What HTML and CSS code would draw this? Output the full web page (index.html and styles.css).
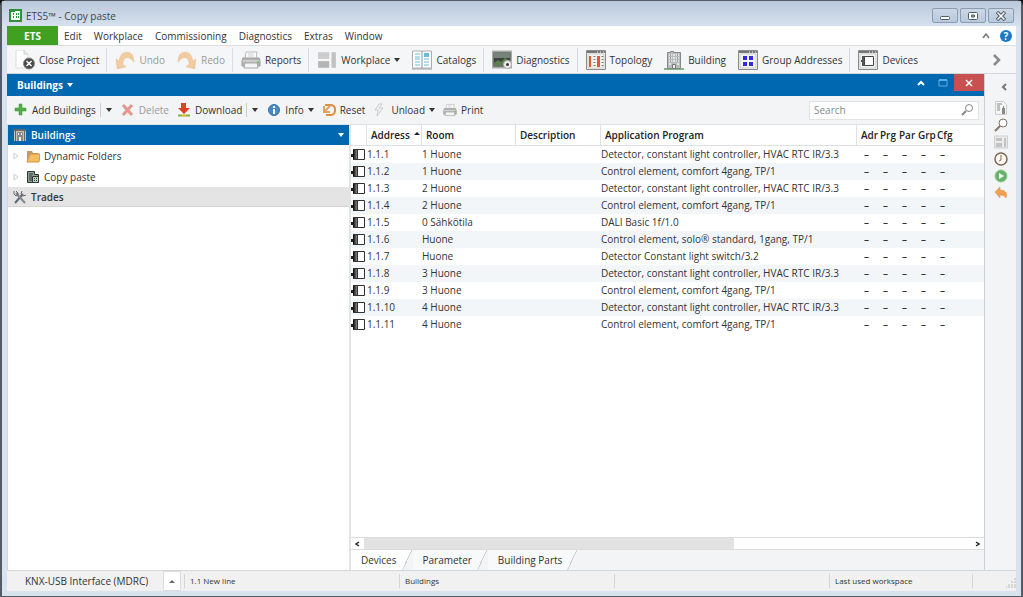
FILE: index.html
```html
<!DOCTYPE html>
<html lang="en">
<head>
    <meta charset="UTF-8">
    <meta name="viewport" content="width=device-width, initial-scale=1.0">
    <title>ETS5™ - Copy paste</title>
    <link rel="stylesheet" href="styles.css">
</head>
<body>
    <!-- shared icons -->
    <svg class="defs" aria-hidden="true">
        <defs>
            <linearGradient id="fade" x1="0" x2="1" y1="0" y2="0">
                <stop offset="0" stop-color="#000"/>
                <stop offset="1" stop-color="#888"/>
            </linearGradient>
        </defs>
        <symbol id="device" viewBox="0 0 15 14">
            <path d="M0 6h2v3H0z" fill="#222"/>
            <path d="M2 1h4v11H2z" fill="url(#fade)"/>
            <path d="M6.500 1.500h7v10h-7z" fill="#fff" stroke="#333"/>
            <path d="M2 1.500h5M2 11.500h5" stroke="#333"/>
        </symbol>
        <symbol id="undo" viewBox="0 0 18 18">
            <path d="M1 8l1 9 8-2-3-2c0-4 2-7 5-6 2 0 3 2 5 4 0-6-2-9-6-9-4 0-7 3-7 8z" fill="#f0a85a" stroke="#dd9545" stroke-width=".5"/>
        </symbol>
        <symbol id="printer" viewBox="0 0 20 18">
            <path d="M5 1h11l-1 7H4z" fill="#fff" stroke="#bbb"/>
            <path d="M2 7h16l1 3v5H1v-5z" fill="#b5b5b5" stroke="#999"/>
            <path d="M1.500 10h17" stroke="#e5e5e5"/>
            <path d="M4 12h12l1 5H3z" fill="#f5f5f5" stroke="#aaa"/>
            <path d="M16 10h2v2h-2z" fill="#7cc07c"/>
            <path d="M7 3h6M7 5h6" stroke="#ccc"/>
        </symbol>
        <symbol id="magnifier" viewBox="0 0 14 14">
            <circle cx="9" cy="5" r="3.500" fill="#fff" stroke="#888"/>
            <path d="M6 8l-4 4" stroke="#888" stroke-width="2"/>
        </symbol>
        <symbol id="layout" viewBox="0 0 18 18">
            <path d="M1 2h10v6H1z" fill="#ccc"/>
            <path d="M1 10h10v6H1z" fill="#b5b5b5"/>
            <path d="M13 2h4v14h-4z" fill="#c2c2c2"/>
        </symbol>
        <symbol id="frame" viewBox="0 0 20 20">
            <path d="M.5 .5h19v19H.5z" fill="#f4f4f2" stroke="#8a8a8a"/>
            <path d="M1 1h18v2H1z" fill="#777"/>
            <path d="M2 4h16v14H2z" fill="none" stroke="#ccc"/>
            <path d="M11 2h1m2 0h1m2 0h1" stroke="#fff"/>
        </symbol>
    </svg>

    <div class="window">
        <header class="titlebar">
            <svg class="app-icon" viewBox="0 0 13 13">
                <path d="M0 0h13v13H0z" fill="#2d9137"/>
                <path d="M2 11V3h4V2h5v9z" fill="#fff"/>
                <path d="M4 4h1v2H4zM4 7h1v2H4zM7 4h1v2H7zM7 7h1v2H7zM9 4h1v2H9zM9 7h1v2H9z" fill="#2d9137"/>
            </svg>
            <h1 class="title">ETS5™ - Copy paste</h1>
            <div class="window-controls">
                <button aria-label="Minimize"><svg viewBox="0 0 12 10"><rect x="1.500" y="5.500" width="9" height="3" rx="1" fill="#fff" stroke="#525c69"/></svg></button>
                <button aria-label="Maximize"><svg viewBox="0 0 12 10"><rect x="1.500" y="1.500" width="9" height="7" rx="1" fill="#fff" stroke="#525c69"/><path d="M4.500 4h3v2h-3z" fill="#aaa" stroke="#525c69"/></svg></button>
                <button aria-label="Close"><svg viewBox="0 0 12 10"><path d="M2 1l8 8M10 1L2 9" stroke="#525c69" stroke-width="3.600"/><path d="M2.500 1.500l7 7M9.500 1.500l-7 7" stroke="#fff" stroke-width="1.500"/></svg></button>
            </div>
        </header>

        <nav class="menubar">
            <button class="ets">ETS</button>
            <button>Edit</button>
            <button>Workplace</button>
            <button>Commissioning</button>
            <button>Diagnostics</button>
            <button>Extras</button>
            <button>Window</button>
            <span class="spacer"></span>
            <button aria-label="Collapse"><svg class="chev" viewBox="0 0 8 8"><path d="M1 6l3-4 3 4" fill="none" stroke="#777" stroke-width="1.500"/></svg></button>
            <button class="help" aria-label="Help">?</button>
        </nav>

        <div class="toolbar">
            <div class="group">
                <button>
                    <svg class="icon" viewBox="0 0 20 20">
                        <path d="M1 0h8l4 4v14H1z" fill="#fff" stroke="#ddd"/>
                        <path d="M9 0v4h4" fill="#eee" stroke="#ccc"/>
                        <circle cx="14" cy="13.500" r="5.500" fill="#4a4a4a" stroke="#888"/>
                        <path d="M11.500 11l5 5M16.500 11l-5 5" stroke="#fff" stroke-width="1.500"/>
                    </svg>
                    Close Project
                </button>
            </div>
            <div class="group">
                <button disabled><svg class="icon"><use href="#undo"/></svg>Undo</button>
                <button disabled><svg class="icon flip"><use href="#undo"/></svg>Redo</button>
            </div>
            <div class="group">
                <button>
                    <svg class="icon"><use href="#printer"/></svg>
                    Reports
                </button>
            </div>
            <div class="group">
                <button><svg class="icon"><use href="#layout"/></svg>Workplace<i class="arrow"></i></button>
                <button>
                    <svg class="icon" viewBox="0 0 20 20">
                        <path d="M.5 1h9l.5 1 .5-1h9v17H.5z" fill="#fff" stroke="#a8b0b5"/>
                        <path d="M10 1v17" stroke="#8a9499"/>
                        <path d="M3 4h5M3 7h5M3 9h5M3 12h5M3 15h5M12 12h5M12 15h5M12 9h5" stroke="#68bbdc"/>
                        <path d="M12 3h5v4h-5z" fill="#68bbdc"/>
                        <path d="M0 19h20" stroke="#999"/>
                    </svg>
                    Catalogs
                </button>
            </div>
            <div class="group">
                <button>
                    <svg class="icon" viewBox="0 0 20 20">
                        <path d="M.5 1.500h19v16H.5z" fill="#3b463b" stroke="#aaa" stroke-width="2"/>
                        <path d="M2 3h16v5H2z" fill="#77827a"/>
                        <path d="M2 13l4-3 3 2 4-4 5 3v5H2z" fill="#5c8050"/>
                        <circle cx="15.500" cy="14.500" r="4" fill="#eee" stroke="#aaa"/>
                        <circle cx="15.500" cy="14.500" r="1.500" fill="#333"/>
                    </svg>
                    Diagnostics
                </button>
            </div>
            <div class="group">
                <button>
                    <svg class="icon" viewBox="0 0 20 20">
                        <use href="#frame"/>
                        <path d="M3 6h2v11H3zM11 6h3v11h-3z" fill="#e4582c"/>
                        <path d="M8.500 6v11M16.500 6v11" stroke="#777" stroke-width="2" stroke-dasharray="1 2"/>
                    </svg>
                    Topology
                </button>
                <button>
                    <svg class="icon" viewBox="0 0 20 20">
                        <path d="M0 18h20v2H0z" fill="#7db87f"/>
                        <path d="M3.500 2.500h3v-1h3v1h7v16h-13z" fill="#b8bcbc" stroke="#858989"/>
                        <path d="M5 4h3v2H5zM9 4h2v2H9zM12 4h3v2h-3zM5 7h3v2H5zM9 7h2v2H9zM12 7h3v2h-3zM5 10h3v2H5zM9 10h2v2H9zM12 10h3v2h-3zM5 13h2v2H5zM13 13h2v2h-2z" fill="#e2e6e6"/>
                        <path d="M6 4h1v2H6zM13 4h1v2h-1zM6 7h1v2H6zM13 7h1v2h-1zM6 10h1v2H6zM13 10h1v2h-1z" fill="#999"/>
                        <path d="M8.500 14.500h3v4h-3z" fill="#eee" stroke="#777"/>
                    </svg>
                    Building
                </button>
                <button>
                    <svg class="icon" viewBox="0 0 20 20">
                        <use href="#frame"/>
                        <path d="M5 6h4v4H5zM11 6h4v4h-4zM5 12h4v4H5zM11 12h4v4h-4z" fill="#3428e8"/>
                    </svg>
                    Group Addresses
                </button>
            </div>
            <div class="group">
                <button>
                    <svg class="icon" viewBox="0 0 20 20">
                        <use href="#frame"/>
                        <path d="M4 6h3v10H4zM3 10h2v2H3z" fill="#555"/>
                        <path d="M6.500 6.500h9v9h-9z" fill="#fff" stroke="#444"/>
                    </svg>
                    Devices
                </button>
            </div>
            <span class="spacer"></span>
            <button class="more" aria-label="More"><svg viewBox="0 0 10 12"><path d="M2 1l5 5-5 5" fill="none" stroke="#888" stroke-width="2.500"/></svg></button>
        </div>

        <div class="workspace">
            <main class="pane">
                <div class="pane-title">
                    <button class="pane-name">Buildings<i class="arrow"></i></button>
                    <span class="spacer"></span>
                    <button class="pane-button" aria-label="Collapse panel"><svg viewBox="0 0 10 10"><path d="M2 7l3-3 3 3" fill="none" stroke="#fff" stroke-width="2"/></svg></button>
                    <button class="pane-button" aria-label="Maximize panel"><svg viewBox="0 0 10 10"><path d="M1 2h8v6H1z" fill="none" stroke="#62aee3"/><path d="M1 2h8" stroke="#62aee3" stroke-width="2"/></svg></button>
                    <button class="pane-button close" aria-label="Close panel"><svg viewBox="0 0 10 10"><path d="M2 2l6 6M8 2L2 8" stroke="#fff" stroke-width="1.500"/></svg></button>
                </div>

                <div class="actions">
                    <button>
                        <svg class="icon" viewBox="0 0 14 14"><path d="M5 1h3v4h4v3H8v4H5V8H1V5h4z" fill="#55ad45" stroke="#3f9335" stroke-width=".5"/></svg>
                        Add Buildings
                    </button>
                    <button class="drop" aria-label="Add options"><i class="arrow"></i></button>
                    <button disabled>
                        <svg class="icon" viewBox="0 0 14 14"><path d="M2 2l9 10M11 2L2 12" stroke="#dc4b3c" stroke-width="3"/></svg>
                        Delete
                    </button>
                    <button>
                        <svg class="icon" viewBox="0 0 14 14"><path d="M4 0h5v5h4l-6 6-6-6h3z" fill="#dc4226"/><path d="M1 12.500h12" stroke="#7fb53e" stroke-width="2"/><path d="M5 12.500h4" stroke="#e9c33b" stroke-width="2"/></svg>
                        Download
                    </button>
                    <button class="drop" aria-label="Download options"><i class="arrow"></i></button>
                    <button>
                        <svg class="icon" viewBox="0 0 14 14"><circle cx="7" cy="7" r="5.500" fill="#4a8ac4" stroke="#3872aa"/><path d="M7 3v2M7 6v5" stroke="#fff" stroke-width="2"/></svg>
                        Info<i class="arrow"></i>
                    </button>
                    <button>
                        <svg class="icon" viewBox="0 0 14 14"><path d="M3 2h6c6 1 5 10 0 10H4" fill="none" stroke="#d99043" stroke-width="2"/><path d="M2 3v6h6M3 8l5-5" fill="none" stroke="#dfa066" stroke-width="2"/></svg>
                        Reset
                    </button>
                    <button>
                        <svg class="icon" viewBox="0 0 14 14"><path d="M6 1L2 7h3l-1 6 6-8H6l3-4z" fill="#f2f2f2" stroke="#ccc"/></svg>
                        Unload<i class="arrow"></i>
                    </button>
                    <button>
                        <svg class="icon"><use href="#printer"/></svg>
                        Print
                    </button>
                    <span class="spacer"></span>
                    <label class="search">
                        <input type="text" placeholder="Search" aria-label="Search">
                        <svg class="small-icon"><use href="#magnifier"/></svg>
                    </label>
                </div>

                <div class="split">
                    <aside class="tree">
                        <div class="tree-head">
                            <svg class="small-icon" viewBox="0 0 14 14">
                                <path d="M1 1h12v12H1z" fill="#c5c5b8"/>
                                <path d="M1 1h12v2H1zM2 3h1v10H2zM11 3h1v10h-1z" fill="#666"/>
                                <path d="M4 4h6v9H4z" fill="#888"/>
                                <path d="M5 5h1v2H5zM8 5h1v2H8zM6 9h2v4H6z" fill="#eee"/>
                            </svg>
                            Buildings
                            <span class="spacer"></span>
                            <i class="arrow"></i>
                        </div>
                        <ul>
                            <li>
                                <svg class="expander" viewBox="0 0 6 8"><path d="M1 1l4 3-4 3z" fill="#fff" stroke="#ccc"/></svg>
                                <svg class="small-icon" viewBox="0 0 14 14"><path d="M1 12V2h5l1 2h5v8z" fill="#c49a67"/><path d="M1 13L4 5h10l-1 8z" fill="#f6bd62" stroke="#cf9540"/></svg>
                                Dynamic Folders
                            </li>
                            <li>
                                <svg class="expander" viewBox="0 0 6 8"><path d="M1 1l4 3-4 3z" fill="#fff" stroke="#ccc"/></svg>
                                <svg class="small-icon" viewBox="0 0 14 14"><path d="M1.500 1.500h7v3h4v8h-11z" fill="#8fa094" stroke="#2b3a31"/><path d="M3 4h4M3 6h3M3 8h3M3 10h3" stroke="#2b3a31"/><path d="M6.500 6.500h6v6h-6z" fill="#c3d0c7" stroke="#2b3a31"/><path d="M8 8h1v1H8zM10 8h1v1h-1zM8 10h1v1H8zM10 10h1v1h-1z" fill="#2b3a31"/></svg>
                                Copy paste
                            </li>
                        </ul>
                        <div class="tree-section">
                            <svg class="small-icon" viewBox="0 0 14 14"><path d="M2 13L10 4" stroke="#596b7c" stroke-width="2"/><path d="M3 3l9 10" stroke="#888" stroke-width="2"/><path d="M1 1v3l2 2 2-1V3L3 1M9 1l-1 3 2 2 3-1" fill="none" stroke="#666"/></svg>
                            Trades
                        </div>
                    </aside>

                    <section class="list">
                        <div class="table-area">
                            <table>
                                <colgroup>
                                    <col class="c-icon"><col class="c-address"><col class="c-room"><col class="c-desc"><col class="c-app">
                                    <col class="c-flag"><col class="c-flag"><col class="c-flag"><col class="c-flag"><col class="c-flag"><col>
                                </colgroup>
                                <thead>
                                    <tr><th></th><th>Address<i class="arrow up"></i></th><th>Room</th><th>Description</th><th>Application Program</th><th class="flag">Adr</th><th class="flag">Prg</th><th class="flag">Par</th><th class="flag">Grp</th><th class="flag">Cfg</th><th></th></tr>
                                </thead>
                                <tbody>
                                    <tr><td><svg class="device"><use href="#device"/></svg></td><td>1.1.1</td><td>1 Huone</td><td></td><td>Detector, constant light controller, HVAC RTC IR/3.3</td><td>–</td><td>–</td><td>–</td><td>–</td><td>–</td><td></td></tr>
                                    <tr><td><svg class="device"><use href="#device"/></svg></td><td>1.1.2</td><td>1 Huone</td><td></td><td>Control element, comfort 4gang, TP/1</td><td>–</td><td>–</td><td>–</td><td>–</td><td>–</td><td></td></tr>
                                    <tr><td><svg class="device"><use href="#device"/></svg></td><td>1.1.3</td><td>2 Huone</td><td></td><td>Detector, constant light controller, HVAC RTC IR/3.3</td><td>–</td><td>–</td><td>–</td><td>–</td><td>–</td><td></td></tr>
                                    <tr><td><svg class="device"><use href="#device"/></svg></td><td>1.1.4</td><td>2 Huone</td><td></td><td>Control element, comfort 4gang, TP/1</td><td>–</td><td>–</td><td>–</td><td>–</td><td>–</td><td></td></tr>
                                    <tr><td><svg class="device"><use href="#device"/></svg></td><td>1.1.5</td><td>0 Sähkötila</td><td></td><td>DALI Basic 1f/1.0</td><td>–</td><td>–</td><td>–</td><td>–</td><td>–</td><td></td></tr>
                                    <tr><td><svg class="device"><use href="#device"/></svg></td><td>1.1.6</td><td>Huone</td><td></td><td>Control element, solo® standard, 1gang, TP/1</td><td>–</td><td>–</td><td>–</td><td>–</td><td>–</td><td></td></tr>
                                    <tr><td><svg class="device"><use href="#device"/></svg></td><td>1.1.7</td><td>Huone</td><td></td><td>Detector Constant light switch/3.2</td><td>–</td><td>–</td><td>–</td><td>–</td><td>–</td><td></td></tr>
                                    <tr><td><svg class="device"><use href="#device"/></svg></td><td>1.1.8</td><td>3 Huone</td><td></td><td>Detector, constant light controller, HVAC RTC IR/3.3</td><td>–</td><td>–</td><td>–</td><td>–</td><td>–</td><td></td></tr>
                                    <tr><td><svg class="device"><use href="#device"/></svg></td><td>1.1.9</td><td>3 Huone</td><td></td><td>Control element, comfort 4gang, TP/1</td><td>–</td><td>–</td><td>–</td><td>–</td><td>–</td><td></td></tr>
                                    <tr><td><svg class="device"><use href="#device"/></svg></td><td>1.1.10</td><td>4 Huone</td><td></td><td>Detector, constant light controller, HVAC RTC IR/3.3</td><td>–</td><td>–</td><td>–</td><td>–</td><td>–</td><td></td></tr>
                                    <tr><td><svg class="device"><use href="#device"/></svg></td><td>1.1.11</td><td>4 Huone</td><td></td><td>Control element, comfort 4gang, TP/1</td><td>–</td><td>–</td><td>–</td><td>–</td><td>–</td><td></td></tr>
                                </tbody>
                            </table>
                        </div>
                        <div class="scrollbar">
                            <button aria-label="Scroll left"><svg viewBox="0 0 6 8"><path d="M5 2L2 4l3 2" fill="none" stroke="#222" stroke-width="1.500"/></svg></button>
                            <div class="track"><div class="thumb"></div></div>
                            <button aria-label="Scroll right"><svg viewBox="0 0 6 8"><path d="M1 2l3 2-3 2" fill="none" stroke="#222" stroke-width="1.500"/></svg></button>
                        </div>
                        <div class="tabs">
                            <button class="tab active">Devices</button>
                            <button class="tab">Parameter</button>
                            <button class="tab">Building Parts</button>
                        </div>
                    </section>
                </div>
            </main>

            <aside class="sidebar">
                <button class="expand" aria-label="Expand sidebar"><svg class="chev" viewBox="0 0 8 8"><path d="M6 1L3 4l3 3" fill="none" stroke="#777" stroke-width="2"/></svg></button>
                <button aria-label="Properties"><svg viewBox="0 0 14 14"><path d="M1.500 .5h8l3 3v10h-11z" fill="#f5f5f5" stroke="#ccc"/><path d="M3 3h5M3 5h3M3 7h3M3 9h3" stroke="#888"/><path d="M8 7h3v6H8zM9 5h1v2H9z" fill="#888"/></svg></button>
                <button aria-label="Find"><svg viewBox="0 0 14 14"><circle cx="9" cy="5" r="4" fill="#fff" stroke="#8a7563"/><path d="M6 8l-5 5" stroke="#8a7563" stroke-width="2"/></svg></button>
                <button aria-label="Workspaces"><svg viewBox="0 0 14 14"><path d="M.5 1h13v12H.5z" fill="#ececec" stroke="#ccc"/><path d="M2 3h6v3H2zM2 8h6v4H2zM10 3h2v9h-2z" fill="#c2c2c2"/></svg></button>
                <button aria-label="To do"><svg viewBox="0 0 14 14"><circle cx="7" cy="7" r="6" fill="#fffaf2" stroke="#806654" stroke-width="1.500"/><path d="M7 3v5L5 9" fill="none" stroke="#806654"/></svg></button>
                <button aria-label="Pending operations"><svg viewBox="0 0 14 14"><circle cx="7" cy="7" r="6" fill="#63b36c" stroke="#8fca94"/><path d="M5 4l5 3-5 3z" fill="#fff"/></svg></button>
                <button aria-label="Undo history"><svg viewBox="0 0 14 14"><path d="M1 6l5-5v3c5 0 8 3 6 8-1-2-3-3-6-3v3z" fill="#f0a04e" stroke="#d98f45" stroke-width=".5"/></svg></button>
            </aside>
        </div>

        <footer class="statusbar">
            <span class="interface">KNX-USB Interface (MDRC)</span>
            <button aria-label="Select interface"><i class="arrow up"></i></button>
            <span>1.1 New line</span>
            <span>Buildings</span>
            <span></span>
            <span>Last used workspace</span>
            <span class="corner"><svg viewBox="0 0 10 10"><path d="M8 1h2M8 4h2M5 4h2M8 7h2M5 7h2M2 7h2M8 9h2M5 9h2M2 9h2M0 9h1" stroke="#bbb"/></svg></span>
        </footer>
    </div>
</body>
</html>
```

FILE: styles.css
```css
* {
    margin: 0;
    padding: 0;
    box-sizing: border-box;
}

body {
    height: 100vh;
    background: #111;
    color: #333;
    font: 10px/16px "Open Sans", "Noto Sans", sans-serif;
    overflow: hidden;
}

button {
    border: 0;
    background: transparent;
    color: inherit;
    font: inherit;
    white-space: nowrap;
}

ul {
    list-style: none;
}

svg {
    display: block;
    flex: none;
}

.defs {
    position: absolute;
    width: 0;
    height: 0;
}

.spacer {
    flex: 1;
}

.arrow {
    display: inline-block;
    width: 0;
    height: 0;
    border: 3px solid transparent;
    border-top: 4px solid currentColor;
    border-bottom: 0;
}

.arrow.up {
    border-top: 0;
    border-bottom: 3px solid currentColor;
}

.small-icon {
    width: 14px;
    height: 14px;
}

.chev {
    width: 8px;
    height: 8px;
}

/* window frame */
.window {
    display: flex;
    flex-direction: column;
    height: 100%;
    padding: 0 5px 5px;
    border: 2px solid #575b66;
    border-bottom-width: 1px;
    border-top-width: 1px;
    border-radius: 6px 6px 0 0;
    background: #d7e4f0;
}

.titlebar {
    display: flex;
    align-items: center;
    height: 25px;
    margin: 0 -5px;
    padding: 4px 7px 0;
    gap: 4px;
    background: linear-gradient(#bac8da, #d5e1ee);
}

.app-icon {
    width: 13px;
    height: 13px;
}

.title {
    flex: 1;
    font-size: 10px;
    font-weight: 400;
    color: #444;
}

.window-controls {
    display: flex;
    gap: 2px;
}

.window-controls button {
    display: flex;
    align-items: center;
    justify-content: center;
    width: 26px;
    height: 15px;
    border: 1px solid #8a9bb2;
    border-radius: 2px;
    background: linear-gradient(#cad7e6, #b9c9dd);
}

.window-controls svg {
    width: 12px;
    height: 10px;
}

/* menu */
.menubar {
    display: flex;
    align-items: center;
    height: 19px;
    background: #fff;
}

.menubar button {
    height: 19px;
    padding: 0 6px;
}

.menubar .ets {
    width: 51px;
    background: #3fa022;
    color: #fff;
    font-weight: 700;
}

.menubar .help {
    width: 12px;
    height: 12px;
    margin: 0 4px;
    padding: 0;
    border-radius: 50%;
    background: #1979ca;
    color: #fff;
    font-weight: 700;
    line-height: 12px;
}

/* main toolbar */
.toolbar {
    display: flex;
    align-items: center;
    height: 29px;
    border-top: 1px solid #dcdcdc;
    border-bottom: 1px solid #d2d7db;
    background: #f5f6f7;
}

.group {
    display: flex;
    padding: 0 1px 0 2px;
    border-right: 1px solid #d9dcdf;
}

.group:last-of-type {
    border-right: 0;
}

.toolbar button {
    display: flex;
    align-items: center;
    height: 24px;
    gap: 4px;
    padding: 0 6px;
}

.toolbar .icon {
    width: 20px;
    height: 20px;
}

.toolbar .flip {
    transform: scaleX(-1);
}

.toolbar .more {
    padding: 0 14px;
}

.more svg {
    width: 10px;
    height: 12px;
}

button:disabled {
    color: #999;
}

button:disabled .icon {
    opacity: .55;
}

/* work area */
.workspace {
    display: flex;
    flex: 1;
    min-height: 0;
    background: #f3f4f6;
}

.pane {
    display: flex;
    flex: 1;
    flex-direction: column;
    min-width: 0;
    border-right: 1px solid #ccd1d6;
}

.pane-title {
    display: flex;
    align-items: flex-start;
    height: 22px;
    background: #0067b1;
    color: #fff;
}

.pane-name {
    display: flex;
    align-items: center;
    gap: 4px;
    height: 22px;
    padding: 0 10px;
    font-weight: 700;
}

.pane-button {
    display: flex;
    align-items: center;
    justify-content: center;
    width: 22px;
    height: 17px;
}

.pane-button svg {
    width: 10px;
    height: 10px;
}

.pane-button.close {
    width: 30px;
    background: #c75050;
}

.actions {
    display: flex;
    align-items: center;
    height: 29px;
    padding: 0 5px 0 3px;
    border-bottom: 1px solid #dfe3e6;
}

.actions button {
    display: flex;
    align-items: center;
    gap: 4px;
    padding: 0 4px;
}

.actions .icon {
    width: 14px;
    height: 14px;
}

.actions .drop {
    height: 14px;
    padding: 0 5px;
    border-left: 1px solid #ccc;
}

.search {
    display: flex;
    align-items: center;
    width: 170px;
    height: 19px;
    padding: 0 4px;
    border: 1px solid #e1e3e5;
    background: #fff;
}

.search input {
    flex: 1;
    min-width: 0;
    border: 0;
    outline: 0;
    background: transparent;
    font: inherit;
}

.search input::placeholder {
    color: #888;
}

.split {
    display: flex;
    flex: 1;
    min-height: 0;
}

/* tree */
.tree {
    width: 35%;
    border-left: 1px solid #d0dbe5;
    background: #fff;
}

.tree-head,
.tree-section,
.tree li {
    display: flex;
    align-items: center;
    gap: 4px;
    height: 20px;
    padding: 0 5px;
}

.tree-head {
    background: #0067b1;
    color: #fff;
    font-weight: 600;
}

.tree li {
    height: 21px;
}

.tree-section {
    border-bottom: 1px solid #d5d5d5;
    background: #e4e4e4;
    font-weight: 600;
}

.expander {
    width: 6px;
    height: 8px;
    margin-right: 3px;
}

/* device list */
.list {
    display: flex;
    flex: 1;
    flex-direction: column;
    min-width: 0;
    border-left: 2px solid #e2e4e6;
}

.table-area {
    flex: 1;
    overflow: hidden;
    background: #fff;
}

table {
    width: 100%;
    border-collapse: separate;
    border-spacing: 0;
    table-layout: fixed;
}

th {
    height: 21px;
    padding: 0 4px;
    border-bottom: 1px solid #dde1e6;
    border-right: 1px solid #dde1e6;
    color: #222;
    font-weight: 600;
    text-align: left;
    white-space: nowrap;
}

th .arrow {
    margin-left: 4px;
    vertical-align: 4px;
}

.flag {
    padding-right: 0;
    border-right: 0;
}

th:last-child {
    border-right: 0;
}

td {
    height: 17px;
    line-height: 17px;
    white-space: nowrap;
}

tbody tr:nth-child(even) {
    background: #f3f6f9;
}

td:nth-child(n+6) {
    font-weight: 600;
    text-align: center;
}

.device {
    width: 15px;
    height: 14px;
}

.c-icon { width: 16px; }
.c-address { width: 55px; }
.c-room { width: 94px; }
.c-desc { width: 85px; }
.c-app { width: 256px; }
.c-flag { width: 19px; }

.scrollbar {
    display: flex;
    height: 13px;
    border-top: 1px solid #dcdcdc;
    border-bottom: 1px solid #dcdcdc;
    background: #fff;
}

.scrollbar button {
    display: flex;
    align-items: center;
    justify-content: center;
    width: 13px;
}

.scrollbar svg {
    width: 6px;
    height: 8px;
}

.track {
    flex: 1;
}

.thumb {
    width: 61%;
    height: 100%;
    background: #e2e2e2;
}

.tabs {
    display: flex;
    height: 20px;
}

.tab {
    padding: 0 16px 0 10px;
    background: linear-gradient(115deg, #f8f9fa calc(100% - 10px), #ccd1d6 calc(100% - 10px), #ccd1d6 calc(100% - 9px), transparent calc(100% - 9px));
}

.tab.active {
    background: linear-gradient(115deg, #fff calc(100% - 10px), #ccd1d6 calc(100% - 10px), #ccd1d6 calc(100% - 9px), transparent calc(100% - 9px));
}

/* right sidebar */
.sidebar {
    display: flex;
    flex-direction: column;
    align-items: center;
    width: 31px;
}

.sidebar button {
    display: flex;
    align-items: center;
    justify-content: center;
    height: 17px;
}

.sidebar svg {
    width: 14px;
    height: 14px;
}

.sidebar .expand {
    align-self: flex-end;
    height: 25px;
    padding-right: 8px;
}

.sidebar .chev {
    width: 8px;
    height: 8px;
}

/* status bar */
.statusbar {
    display: grid;
    grid-template-columns: 156px 21px 215fr 215fr 215fr 143fr 44px;
    align-items: center;
    height: 21px;
    border-top: 1px solid #d5d8da;
    background: #f1f1f2;
    font-size: 8px;
}

.statusbar span {
    height: 14px;
    line-height: 14px;
    padding-left: 5px;
    border-left: 1px solid #d5d5d5;
}

.statusbar .interface {
    padding-left: 18px;
    border: 0;
    font-size: 10px;
}

.statusbar button {
    display: flex;
    align-items: center;
    justify-content: center;
    width: 18px;
    height: 20px;
    border: 1px solid #ddd;
    background: #fff;
    color: #666;
}

.statusbar .corner {
    display: flex;
    align-items: flex-end;
    justify-content: flex-end;
}

.corner svg {
    width: 10px;
    height: 10px;
}
```
